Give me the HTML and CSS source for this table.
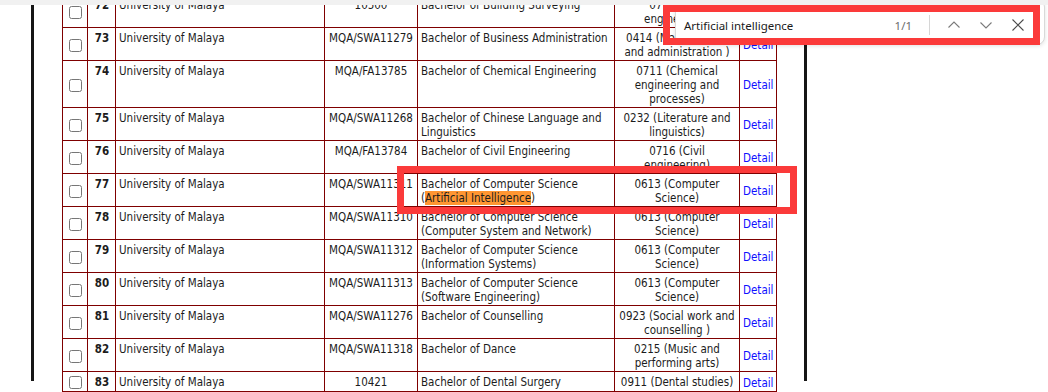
FILE: index.html
```html
<!DOCTYPE html>
<html>
<head>
<meta charset="utf-8">
<link rel="stylesheet" href="styles.css">
</head>
<body>
<div class="topstrip"></div>
<div class="viewport">
  <div class="page">
    <table class="list">
      <colgroup>
        <col class="c-chk"><col class="c-no"><col class="c-uni"><col class="c-mqa"><col class="c-prog"><col class="c-field"><col class="c-det">
      </colgroup>
      <tbody>
        <tr><td class="chk"><input type="checkbox"></td><td class="no">72</td><td>University of Malaya</td><td class="ctr">10500</td><td>Bachelor of Building Surveying</td><td class="ctr">0716 (Civil engineering)</td><td class="det"><a href="#">Detail</a></td></tr>
        <tr><td class="chk"><input type="checkbox"></td><td class="no">73</td><td>University of Malaya</td><td class="ctr">MQA/SWA11279</td><td>Bachelor of Business Administration</td><td class="ctr">0414 (Management and administration )</td><td class="det"><a href="#">Detail</a></td></tr>
        <tr><td class="chk"><input type="checkbox"></td><td class="no">74</td><td>University of Malaya</td><td class="ctr">MQA/FA13785</td><td>Bachelor of Chemical Engineering</td><td class="ctr">0711 (Chemical engineering and processes)</td><td class="det"><a href="#">Detail</a></td></tr>
        <tr><td class="chk"><input type="checkbox"></td><td class="no">75</td><td>University of Malaya</td><td class="ctr">MQA/SWA11268</td><td>Bachelor of Chinese Language and Linguistics</td><td class="ctr">0232 (Literature and linguistics)</td><td class="det"><a href="#">Detail</a></td></tr>
        <tr><td class="chk"><input type="checkbox"></td><td class="no">76</td><td>University of Malaya</td><td class="ctr">MQA/FA13784</td><td>Bachelor of Civil Engineering</td><td class="ctr">0716 (Civil engineering)</td><td class="det"><a href="#">Detail</a></td></tr>
        <tr><td class="chk"><input type="checkbox"></td><td class="no">77</td><td>University of Malaya</td><td class="ctr">MQA/SWA11311</td><td>Bachelor of Computer Science (<span class="hit">Artificial Intelligence</span>)</td><td class="ctr">0613 (Computer Science)</td><td class="det"><a href="#">Detail</a></td></tr>
        <tr><td class="chk"><input type="checkbox"></td><td class="no">78</td><td>University of Malaya</td><td class="ctr">MQA/SWA11310</td><td>Bachelor of Computer Science (Computer System and Network)</td><td class="ctr">0613 (Computer Science)</td><td class="det"><a href="#">Detail</a></td></tr>
        <tr><td class="chk"><input type="checkbox"></td><td class="no">79</td><td>University of Malaya</td><td class="ctr">MQA/SWA11312</td><td>Bachelor of Computer Science (Information Systems)</td><td class="ctr">0613 (Computer Science)</td><td class="det"><a href="#">Detail</a></td></tr>
        <tr><td class="chk"><input type="checkbox"></td><td class="no">80</td><td>University of Malaya</td><td class="ctr">MQA/SWA11313</td><td>Bachelor of Computer Science (Software Engineering)</td><td class="ctr">0613 (Computer Science)</td><td class="det"><a href="#">Detail</a></td></tr>
        <tr><td class="chk"><input type="checkbox"></td><td class="no">81</td><td>University of Malaya</td><td class="ctr">MQA/SWA11276</td><td>Bachelor of Counselling</td><td class="ctr">0923 (Social work and counselling )</td><td class="det"><a href="#">Detail</a></td></tr>
        <tr><td class="chk"><input type="checkbox"></td><td class="no">82</td><td>University of Malaya</td><td class="ctr">MQA/SWA11318</td><td>Bachelor of Dance</td><td class="ctr">0215 (Music and performing arts)</td><td class="det"><a href="#">Detail</a></td></tr>
        <tr><td class="chk"><input type="checkbox"></td><td class="no">83</td><td>University of Malaya</td><td class="ctr">10421</td><td>Bachelor of Dental Surgery</td><td class="ctr">0911 (Dental studies)</td><td class="det"><a href="#">Detail</a></td></tr>
        <tr><td class="chk"><input type="checkbox"></td><td class="no">84</td><td>University of Malaya</td><td class="ctr">MQA/SWA11280</td><td>Bachelor of Economics</td><td class="ctr">0311 (Economics)</td><td class="det"><a href="#">Detail</a></td></tr>
      </tbody>
    </table>
  </div>

  <div class="findbar">
    <span class="find-text">Artificial intelligence</span>
    <span class="find-count">1/1</span>
    <span class="find-sep"></span>
    <span class="find-btn"><svg width="14" height="14" viewBox="0 0 14 14"><path d="M1.5 9.5 L7 4 L12.5 9.5" fill="none" stroke="#7a7a7a" stroke-width="1.1"/></svg></span>
    <span class="find-btn"><svg width="14" height="14" viewBox="0 0 14 14"><path d="M1.5 4.5 L7 10 L12.5 4.5" fill="none" stroke="#7a7a7a" stroke-width="1.1"/></svg></span>
    <span class="find-btn"><svg width="14" height="14" viewBox="0 0 14 14"><path d="M1.5 1.5 L12.5 12.5 M12.5 1.5 L1.5 12.5" fill="none" stroke="#4a4a4a" stroke-width="1.1"/></svg></span>
  </div>

  <div class="mark mark-find"></div>
  <div class="mark mark-row"></div>
</div>
</body>
</html>
```

FILE: styles.css
```css
html, body {
  margin: 0;
  padding: 0;
  background: #ffffff;
  overflow: hidden;
}

.topstrip {
  height: 5px;
  background: #f1f1f1;
}

.viewport {
  position: relative;
  height: 387px;
  overflow: hidden;
}

.page {
  margin-left: 31px;
  width: 742px;
  height: 100%;
  border-left: 3px solid #161616;
  border-right: 3px solid #161616;
  padding-left: 28px;
  box-sizing: content-box;
}

.list {
  margin-top: -11px;
  border-collapse: collapse;
  table-layout: fixed;
  width: 714px;
  font-family: "DejaVu Sans Condensed", "DejaVu Sans", sans-serif;
  font-stretch: condensed;
  font-size: 11.5px;
  line-height: 14px;
  color: #1c1c1c;
  border: 1px solid #7f0000;
}

.c-chk { width: 25px; }
.c-no { width: 28px; }
.c-uni { width: 209px; }
.c-mqa { width: 93px; }
.c-prog { width: 197px; }
.c-field { width: 125px; }
.c-det { width: 37px; }

.list td {
  border: 1px solid #7f0000;
  padding: 3px 2px 1px 3px;
  vertical-align: top;
}

.list td.chk {
  vertical-align: middle;
  padding: 0 2px;
}

.chk input {
  margin: 4px 3px 2px 4px;
  width: 13px;
  height: 13px;
  display: block;
}

.list td.no {
  text-align: center;
  font-weight: bold;
}

.list td.ctr {
  text-align: center;
  padding-left: 1px;
  padding-right: 1px;
}

.list td.det {
  vertical-align: middle;
}

.det a {
  color: #1010ff;
  text-decoration: none;
}

.hit {
  background: #ff9632;
}

.findbar {
  position: absolute;
  left: 675px;
  top: -6px;
  width: 370px;
  height: 46px;
  box-sizing: border-box;
  background: #ffffff;
  border: 1px solid #d9d9d9;
  border-radius: 8px;
  box-shadow: 0 1px 4px rgba(0, 0, 0, 0.12);
  display: flex;
  align-items: center;
  padding: 6px 10px 0 8px;
  font-family: "Noto Sans", "Open Sans", sans-serif;
  font-size: 11.5px;
  color: #1a1a1a;
}

.find-text {
  flex: 1;
}

.find-count {
  color: #6b6b6b;
  margin-right: 17px;
}

.find-sep {
  width: 1px;
  height: 20px;
  background: #d6d6d6;
  margin-right: 8px;
}

.find-btn {
  display: flex;
  width: 32px;
  justify-content: center;
}

.mark {
  position: absolute;
  box-sizing: border-box;
  border: 7px solid #fb3a3a;
  pointer-events: none;
}

.mark-find {
  left: 663px;
  top: 0px;
  width: 377px;
  height: 40px;
}

.mark-row {
  left: 397px;
  top: 161px;
  width: 400px;
  height: 48px;
}
```
